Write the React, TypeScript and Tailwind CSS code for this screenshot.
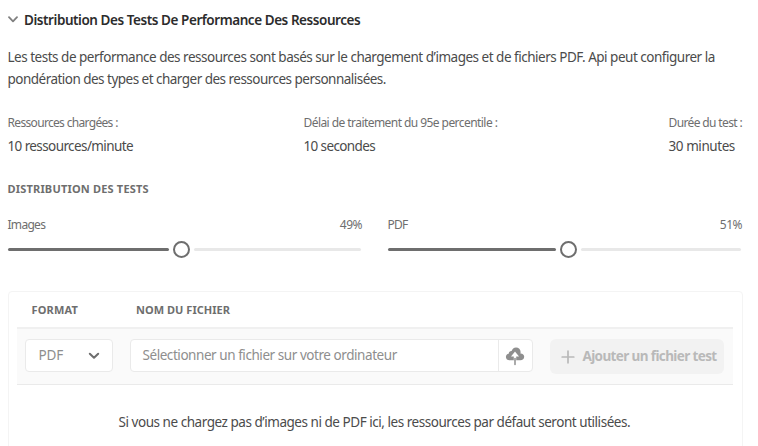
import React from "react";

function Slider({ label, value, filled, rest }: { label: string; value: string; filled: number; rest: number }) {
  return (
    <div>
      <div className="flex h-[18px] items-center justify-between text-[12px] leading-[18px] text-[#6e6e6e]">
        <span className="tracking-[-0.7px]">{label}</span>
        <span className="tracking-[-0.5px]">{value}</span>
      </div>
      <div className="mt-[6.5px] flex h-[17px] items-center">
        <div className="h-[3px] rounded-full bg-[#6e6e6e]" style={{ width: filled }} />
        <div className="mx-[4px] h-[17px] w-[17px] shrink-0 rounded-full border-2 border-[#6e6e6e] bg-white" />
        <div className="h-[3px] rounded-full bg-[#e8e8e8]" style={{ width: rest }} />
      </div>
    </div>
  );
}

export default function App() {
  return (
    <main className="h-[446px] w-[758px] overflow-hidden whitespace-nowrap bg-white pl-[7.5px] pr-[15px] pt-[8px] font-['Noto_Sans',sans-serif] text-[13.5px] text-[#4b4b4b]">
      <div className="flex h-[23px] items-center">
        <svg className="w-[10px] shrink-0" width="10" height="7" viewBox="0 0 10 7" fill="none" stroke="#808080" strokeWidth="1.8" strokeLinecap="round" strokeLinejoin="round">
          <path d="M1 1.2 5 5.4 9 1.2" />
        </svg>
        <h2 className="ml-[6.5px] font-semibold leading-[22px] tracking-[-0.44px] text-[#2c2c2c]">Distribution Des Tests De Performance Des Ressources</h2>
      </div>

      <div className="mt-[15px] leading-[22px]">
        <p className="tracking-[-0.49px]">Les tests de performance des ressources sont basés sur le chargement d’images et de fichiers PDF. Api peut configurer la</p>
        <p className="tracking-[-0.52px]">pondération des types et charger des ressources personnalisées.</p>
      </div>

      <div className="mt-[24px] flex">
        <div className="w-[296px] shrink-0">
          <div className="text-[12px] leading-[18px] tracking-[-0.67px] text-[#6e6e6e]">Ressources chargées :</div>
          <div className="mt-[3px] leading-[22px] tracking-[-0.6px]">10 ressources/minute</div>
        </div>
        <div className="w-[365px] shrink-0">
          <div className="text-[12px] leading-[18px] tracking-[-0.56px] text-[#6e6e6e]">Délai de traitement du 95e percentile :</div>
          <div className="mt-[3px] leading-[22px] tracking-[-0.63px]">10 secondes</div>
        </div>
        <div>
          <div className="text-[12px] leading-[18px] tracking-[-0.63px] text-[#6e6e6e]">Durée du test :</div>
          <div className="mt-[3px] leading-[22px] tracking-[-0.43px]">30 minutes</div>
        </div>
      </div>

      <h3 className="mt-[23px] text-[11px] font-bold leading-[18px] tracking-[0.19px] text-[#6e6e6e]">DISTRIBUTION DES TESTS</h3>

      <div className="mt-[18px] grid grid-cols-[354.5px_354.5px] gap-[25.5px]">
        <Slider label="Images" value="49%" filled={161} rest={167.5} />
        <Slider label="PDF" value="51%" filled={168} rest={160.5} />
      </div>

      <section className="mt-[33.5px] h-[180px] w-[735px] rounded-t-[4px] border border-[#f4f4f4] pl-[8px] pr-[9px]">
        <div className="flex h-[35px] items-center pl-[15px] pt-px text-[11px] font-bold text-[#6e6e6e]">
          <span className="w-[104.5px] tracking-[0.15px]">FORMAT</span>
          <span className="tracking-[0.03px]">NOM DU FICHIER</span>
        </div>
        <div className="flex h-[58px] items-start border-b border-t-2 border-b-[#eaeaea] border-t-[#f0f0f0] bg-[#fafafa] pl-[8px] pt-[10px] text-[#8e8e8e]">
          <button className="flex h-[33px] w-[88px] shrink-0 items-center justify-between rounded-[4px] border border-[#eaeaea] bg-white pl-[13px] pr-[12px]">
            <span className="tracking-[-0.15px]">PDF</span>
            <svg width="12" height="8" viewBox="0 0 12 8" fill="none" stroke="#6e6e6e" strokeWidth="2" strokeLinecap="round" strokeLinejoin="round">
              <path d="M1.8 1.7 6 5.8 10.2 1.7" />
            </svg>
          </button>
          <div className="ml-[17px] flex h-[33px] w-[403px] shrink-0 rounded-[4px] border border-[#eaeaea] bg-white">
            <div className="flex w-[368px] shrink-0 items-center border-r border-[#eaeaea] pl-[12px]">
              <span className="tracking-[-0.44px]">Sélectionner un fichier sur votre ordinateur</span>
            </div>
            <div className="flex flex-1 items-center justify-center">
              <svg width="20" height="20" viewBox="0 0 20 20">
                <path fill="#8e8e8e" d="M4.6 14.2C2.5 14.2.9 12.9.9 10.9c0-1.7 1.2-2.9 2.8-3.1C3.8 6.1 5 5 6.6 5.1 7.2 2.9 8.8 1.4 11 1.4c2.7 0 4.6 1.8 4.6 4.5 0 .5 0 1-.2 1.5 2.2-.1 3.8 1.3 3.8 3.3s-1.6 3.5-3.8 3.5Z" />
                <path fill="none" stroke="#fff" strokeWidth="2.4" d="M10 9v5.6" />
                <path fill="#fff" d="m10 5.6 4 4.8H6Z" />
                <path stroke="#8e8e8e" strokeWidth="1.5" strokeLinecap="round" d="M10 12.4v6" />
              </svg>
            </div>
          </div>
          <button className="ml-[17px] flex h-[35px] w-[174px] shrink-0 items-center rounded-[6px] bg-[#f2f2f2] pl-[11px] font-bold text-[#b9b9b9]">
            <svg className="shrink-0" width="14" height="14" viewBox="0 0 14 14" stroke="#b9b9b9" strokeWidth="1.7" strokeLinecap="round">
              <path d="M7 1.2v11.6M1.2 7h11.6" />
            </svg>
            <span className="ml-[8px] tracking-[-0.62px]">Ajouter un fichier test</span>
          </button>
        </div>
        <p className="mt-[26px] pl-[102px] leading-[22px] tracking-[-0.46px]">Si vous ne chargez pas d’images ni de PDF ici, les ressources par défaut seront utilisées.</p>
      </section>
    </main>
  );
}
